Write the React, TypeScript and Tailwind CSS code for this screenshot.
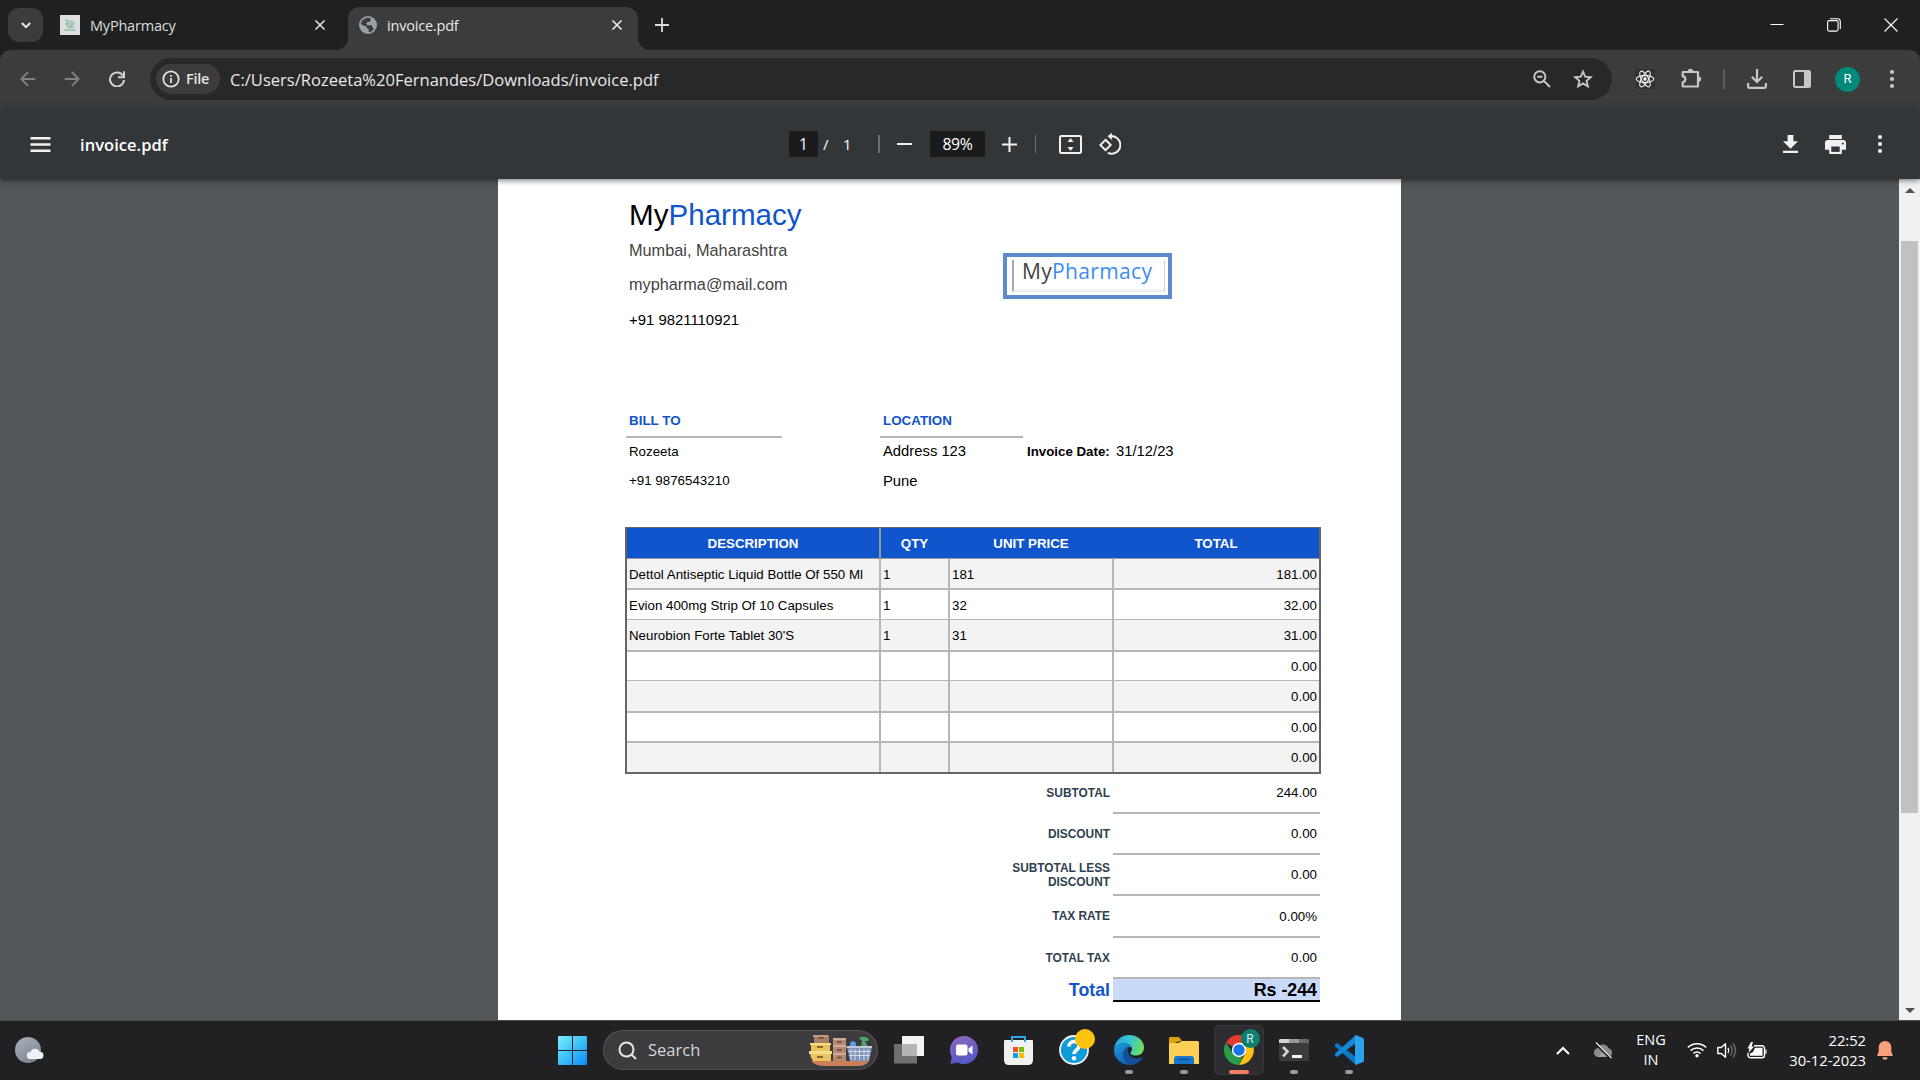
import React from "react";

type IconProps = { className?: string };

const ui = "font-['Open_Sans',sans-serif]";

/* ---------- Browser chrome ---------- */

function Cross({ className = "" }: IconProps) {
  return (
    <svg viewBox="0 0 12 12" className={className} fill="none" stroke="currentColor" strokeWidth="1.7">
      <path d="M1.5 1.5 10.5 10.5M10.5 1.5 1.5 10.5" />
    </svg>
  );
}

function Globe() {
  return (
    <svg viewBox="0 0 18 18" className="h-[18px] w-[18px]">
      <circle cx="9" cy="9" r="9" fill="#9aa0a6" />
      <path d="M8.2 1.8C5 2.2 2.4 4.600 1.800 8l3.400 2h2.300v1.800l2.200 1.500v2.900c1.800-.2 3.300-1 4.500-2.200l.4-1.800-1.300-1.200-.3-1.700H8.500L7.200 7.600l1-1.600h2.300l1.200-1.700V2.400c-1-.5-2.300-.8-3.500-.6z" fill="#3c3c3c" />
    </svg>
  );
}

function Dots({ className = "" }: IconProps) {
  return (
    <svg viewBox="0 0 6 20" className={className} fill="currentColor">
      <circle cx="3" cy="3" r="2.100" />
      <circle cx="3" cy="10" r="2.100" />
      <circle cx="3" cy="17" r="2.100" />
    </svg>
  );
}

function TabStrip() {
  return (
    <div className="flex h-[50px] items-center bg-[#1f2020] text-[#dcdcdc]">
      <div className="ml-2 flex h-[34px] w-[35px] items-center justify-center rounded-[11px] bg-[#3c3c3c]">
        <svg viewBox="0 0 10 7" className="h-[7px] w-[10px]" fill="none" stroke="#e8e8e8" strokeWidth="2">
          <path d="M.8 1 5 5.200 9.200 1" />
        </svg>
      </div>
      <div className="ml-[17px] flex h-5 w-5 items-center justify-center bg-[#dfdfdf]">
        <svg viewBox="0 0 14 14" className="h-[14px] w-[14px]" fill="none" stroke="#8fc4a9" strokeWidth="1.300">
          <path d="M2 2h2v4h3M5 3.500h4l2 2-1 4H5L3 6zM5.500 6h4M6 8h3M1 12h12" />
        </svg>
      </div>
      <span className={`${ui} ml-[10px] mt-[2px] w-[225px] text-[14.500px] leading-5 tracking-[-0.2px]`}>MyPharmacy</span>
      <Cross className="-ml-[1px] h-[12px] w-[12px]" />
      <div className="relative ml-[22px] mt-[7px] flex h-[43px] w-[290px] items-center rounded-t-[12px] bg-[#3c3c3c] pb-[7px] pl-[11px] text-[#e8e8e8]">
        <div className="absolute -left-3 bottom-0 h-3 w-3 overflow-hidden bg-[#3c3c3c]">
          <div className="h-3 w-3 rounded-br-[12px] bg-[#1f2020]" />
        </div>
        <div className="absolute -right-3 bottom-0 h-3 w-3 overflow-hidden bg-[#3c3c3c]">
          <div className="h-3 w-3 rounded-bl-[12px] bg-[#1f2020]" />
        </div>
        <Globe />
        <span className={`${ui} ml-[10px] mt-[2px] w-[224px] text-[14.500px] leading-5 tracking-[-0.2px]`}>invoice.pdf</span>
        <Cross className="h-[12px] w-[12px]" />
      </div>
      <svg viewBox="0 0 14 14" className="ml-[17px] h-[14px] w-[14px]" fill="none" stroke="#dcdcdc" strokeWidth="1.800">
        <path d="M7 0v14M0 7h14" />
      </svg>
      <div className="ml-auto mr-[22px] flex items-center gap-[43px]">
        <svg viewBox="0 0 14 14" className="h-[14px] w-[14px]" stroke="#fff" strokeWidth="1">
          <path d="M.5 6.500h13" />
        </svg>
        <svg viewBox="0 0 14 14" className="h-[14px] w-[14px]" fill="none" stroke="#fff" strokeWidth="1.100">
          <rect x=".6" y="2.600" width="10.500" height="10.500" rx="1.800" />
          <path d="M3 .7h7.500a2.800 2.800 0 0 1 2.800 2.800V11" />
        </svg>
        <svg viewBox="0 0 14 14" className="h-[14px] w-[14px]" stroke="#fff" strokeWidth="1.100">
          <path d="M.5.5l13 13M13.500.5l-13 13" />
        </svg>
      </div>
    </div>
  );
}

function ReactLogo() {
  return (
    <div className="flex h-5 w-5 items-center justify-center bg-[#323232]">
      <svg viewBox="-10 -10 20 20" className="h-5 w-5" fill="none" stroke="#f2f2f2" strokeWidth="1.100">
        <circle r="1.700" fill="#fff" stroke="none" />
        <ellipse rx="8.800" ry="3.400" />
        <ellipse rx="8.800" ry="3.400" transform="rotate(60)" />
        <ellipse rx="8.800" ry="3.400" transform="rotate(120)" />
      </svg>
    </div>
  );
}

function AddressBar() {
  return (
    <div className="bg-[#1f2020]">
      <div className="flex h-[59px] items-center rounded-t-[10px] border-b border-[#4a4a4a] bg-[#3c3c3c] text-[#c7c7c7]">
        <svg viewBox="0 0 16 16" className="ml-5 h-4 w-4" fill="none" stroke="#808080" strokeWidth="1.900">
          <path d="M15.200 8H1.500M8 1.200 1.300 8 8 14.800" />
        </svg>
        <svg viewBox="0 0 16 16" className="ml-[28px] h-4 w-4" fill="none" stroke="#808080" strokeWidth="1.900">
          <path d="M.8 8h13.700M8 1.200 14.700 8 8 14.800" />
        </svg>
        <svg viewBox="0 0 16 16" className="ml-[29px] h-4 w-4" fill="none" stroke="#d0d0d0" strokeWidth="2">
          <path d="M14 4.800A7 7 0 1 0 15 9" />
          <path d="M15 .3v5.900H9" />
        </svg>
        <div className="ml-[25px] flex h-[42px] w-[1462px] items-center rounded-full bg-[#282828] pl-[6px] pr-[19px]">
          <div className="flex h-[30px] w-[64px] items-center rounded-full bg-[#3c3c3c] pl-[6px] text-[#e3e3e3]">
            <svg viewBox="0 0 18 18" className="h-[18px] w-[18px]" fill="none" stroke="currentColor" strokeWidth="1.800">
              <circle cx="9" cy="9" r="7.700" />
              <path d="M9 8v5M9 5v1.800" />
            </svg>
            <span className={`${ui} ml-[6px] text-[14.500px] font-semibold leading-5 tracking-[-0.300px]`}>File</span>
          </div>
          <span className={`${ui} ml-[10px] mt-[2px] whitespace-nowrap text-[16.500px] leading-6 tracking-[0.020px] text-[#e8e8e8]`}>
            C:/Users/Rozeeta%20Fernandes/Downloads/invoice.pdf
          </span>
          <svg viewBox="0 0 18 18" className="ml-auto h-[18px] w-[18px]" fill="none" stroke="currentColor" strokeWidth="2">
            <circle cx="6.800" cy="6.800" r="5.600" />
            <path d="M10.900 10.900 17 17M4.200 6.800h5.200" />
          </svg>
          <svg viewBox="0 0 20 20" className="ml-[22px] h-5 w-5" fill="none" stroke="currentColor" strokeWidth="1.900">
            <path d="m10 2.600 2.200 5.100 5.600.5-4.200 3.700 1.200 5.400L10 14.400l-4.800 2.900 1.200-5.400-4.200-3.700 5.600-.5z" />
          </svg>
        </div>
        <div className="ml-[23px]">
          <ReactLogo />
        </div>
        <svg viewBox="0 0 22 22" className="ml-[25px] h-[22px] w-[22px]" fill="none" stroke="currentColor" strokeWidth="2.200">
          <path d="M4 4h14v14.500H2.700v-4.100c3.500-.6 3.500-5.600 0-6.200V4z" strokeLinejoin="round" />
          <path d="M7.800 3.500a2.700 2.700 0 0 1 5.400 0zM18.500 8.400a2.700 2.700 0 0 1 0 5.400z" fill="currentColor" stroke="none" />
        </svg>
        <div className="ml-[21px] h-5 w-[2px] bg-[#5c5c5c]" />
        <svg viewBox="0 0 20 20" className="ml-[22px] h-5 w-5" fill="none" stroke="currentColor" strokeWidth="2.200">
          <path d="M10 0v12.500M4.800 7.800 10 13l5.200-5.200M1.100 14v3.600q0 1.300 1.300 1.300h15.200q1.300 0 1.300-1.300V14" />
        </svg>
        <svg viewBox="0 0 18 18" className="ml-[26px] h-[18px] w-[18px]">
          <rect x="1" y="1" width="16" height="16" rx="1.500" fill="none" stroke="currentColor" strokeWidth="2" />
          <path d="M11 1h6v16h-6z" fill="currentColor" />
        </svg>
        <div className="ml-6 flex h-[25px] w-[25px] items-center justify-center rounded-full bg-[#00897b] font-[Roboto,sans-serif] text-[13px] text-white">
          R
        </div>
        <Dots className="ml-[29px] h-5 w-[6px]" />
      </div>
    </div>
  );
}

/* ---------- PDF viewer ---------- */

function PdfToolbar() {
  return (
    <div className="relative z-10 flex h-[70px] items-center bg-[#323639] text-[#f1f1f1] shadow-[0_1px_6px_rgba(0,0,0,0.600)]">
      <div className="flex w-[789px] items-center">
        <svg viewBox="0 0 20 15" className="ml-[30px] mt-px h-[15px] w-[21px]" fill="currentColor">
          <path d="M0 0h20v2.400H0zM0 6.300h20v2.400H0zM0 12.600h20V15H0z" />
        </svg>
        <span className={`${ui} ml-[29px] mt-[2px] text-[16.500px] font-semibold leading-6 tracking-[0.050px] text-white`}>invoice.pdf</span>
      </div>
      <span className={`${ui} h-[26px] w-[29px] bg-[#191b1c] text-center text-[15.500px] leading-[26px] text-white`}>1</span>
      <span className={`${ui} ml-[5px] w-[20px] text-[15px] leading-[26px] text-white`}>/</span>
      <span className={`${ui} w-[35px] text-[15px] leading-[26px] text-white`}>1</span>
      <div className="h-[18px] w-[2px] bg-[#6b6e70]" />
      <div className="ml-[17px] h-[2px] w-[15px] bg-[#f1f1f1]" />
      <span className={`${ui} ml-[18px] h-[26px] w-[55px] bg-[#191b1c] text-center text-[15.800px] leading-[26px] tracking-[-0.300px] text-white`}>89%</span>
      <svg viewBox="0 0 15 15" className="ml-[17px] h-[15px] w-[15px]" fill="none" stroke="currentColor" strokeWidth="2">
        <path d="M7.500 0v15M0 7.500h15" />
      </svg>
      <div className="ml-[18px] h-[18px] w-px bg-[#6b6e70]" />
      <svg viewBox="0 0 23 19" className="ml-[23px] h-[19px] w-[23px]">
        <rect x="1" y="1" width="21" height="17" rx="1.200" fill="none" stroke="currentColor" strokeWidth="2" />
        <path d="m11.500 3 3 4h-6zM11.500 16l-3-4h6z" fill="currentColor" />
      </svg>
      <svg viewBox="0 0 22 22" className="ml-[17px] h-[22px] w-[22px]" fill="none" stroke="currentColor" strokeWidth="2">
        <path d="m6.500 6.800 5.200 5.200-5.200 5.200L1.300 12z" />
        <path d="M11.500 3.200a8.800 8.800 0 1 1-2.700 16.700" />
        <path d="M12.800-.3v7.200L8.600 3.300z" fill="currentColor" stroke="none" />
      </svg>
      <div className="ml-auto mr-[37px] flex items-center">
        <svg viewBox="0 0 15 18" className="h-[18px] w-[15px]" fill="currentColor">
          <path d="M4.600 0h5.800v6.200H15l-7.500 7.500L0 6.200h4.600zM0 15.700h15V18H0z" />
        </svg>
        <svg viewBox="0 0 21 19" className="ml-[27px] h-[19px] w-[21px]">
          <path d="M4.200 0h12.600v4H4.200zM3 5h15a3 3 0 0 1 3 3v6.800h-4.200V19H4.200v-4.200H0V8a3 3 0 0 1 3-3z" fill="currentColor" />
          <path d="M6.300 11.500h8.400v5.400H6.300z" fill="#323639" />
          <circle cx="17.800" cy="8.600" r="1" fill="#323639" />
        </svg>
        <Dots className="ml-[31px] h-5 w-[6px]" />
      </div>
    </div>
  );
}

type Item = { name: string; qty: string; price: string; total: string; row: string };

const items: Item[] = [
  { name: "Dettol Antiseptic Liquid Bottle Of 550 Ml", qty: "1", price: "181", total: "181.00", row: "h-[31px] border-b-2 bg-[#f3f3f3] leading-[31px]" },
  { name: "Evion 400mg Strip Of 10 Capsules", qty: "1", price: "32", total: "32.00", row: "h-[30px] border-b bg-white leading-[31px]" },
  { name: "Neurobion Forte Tablet 30'S", qty: "1", price: "31", total: "31.00", row: "h-[32px] border-b-2 bg-[#f3f3f3] leading-[32px]" },
  { name: "", qty: "", price: "", total: "0.00", row: "h-[29px] border-b bg-white leading-[30px]" },
  { name: "", qty: "", price: "", total: "0.00", row: "h-[32px] border-b-2 bg-[#f3f3f3] leading-[32px]" },
  { name: "", qty: "", price: "", total: "0.00", row: "h-[30px] border-b-2 bg-white leading-[30px]" },
  { name: "", qty: "", price: "", total: "0.00", row: "h-[29px] border-b-0 bg-[#f3f3f3] leading-[29px]" },
];

function ItemsTable() {
  return (
    <div className="mt-[31px] w-[696px] border-x-2 border-b-2 border-t border-[#666666] text-[13.300px]">
      <div className="flex h-[31px] border-b border-[#999] bg-[#1155cc] text-center font-bold leading-[31px] text-white">
        <div className="w-[254px] border-r-2 border-[#999]">DESCRIPTION</div>
        <div className="w-[67px]">QTY</div>
        <div className="w-[166px]">UNIT PRICE</div>
        <div className="w-[204px]">TOTAL</div>
      </div>
      {items.map((item, i) => (
        <div key={i} className={`flex items-stretch border-[#b7b7b7] ${item.row}`}>
          <div className="w-[254px] whitespace-nowrap border-r-2 border-[#b7b7b7] pl-[2px] tracking-[0.010px]">{item.name}</div>
          <div className="w-[69px] border-r-2 border-[#b7b7b7] pl-[2px]">{item.qty}</div>
          <div className="w-[164px] border-r-2 border-[#b7b7b7] pl-[2px]">{item.price}</div>
          <div className="w-[205px] pr-[2px] text-right">{item.total}</div>
        </div>
      ))}
    </div>
  );
}

const totals = [
  { label: "SUBTOTAL", value: "244.00", row: "h-[40px]", labelPad: "pb-[2px]", valuePad: "" },
  { label: "DISCOUNT", value: "0.00", row: "h-[41px]", labelPad: "pb-[2px]", valuePad: "" },
  { label: "SUBTOTAL LESS DISCOUNT", value: "0.00", row: "h-[41px]", labelPad: "pb-[2px]", valuePad: "" },
  { label: "TAX RATE", value: "0.00%", row: "h-[42px]", labelPad: "pb-[2px]", valuePad: "pt-[1px]" },
  { label: "TOTAL TAX", value: "0.00", row: "h-[41px]", labelPad: "pb-[1px]", valuePad: "pt-[1px]" },
];

function Totals() {
  return (
    <div className="ml-[374px] w-[321px]">
      {totals.map((t) => (
        <div key={t.label} className={`flex ${t.row}`}>
          <div className={`flex w-[114px] items-center justify-end pr-[3px] text-right text-[11.900px] font-bold leading-[14px] text-[#2f3f4f] ${t.labelPad}`}>
            <span className="w-[104px]">{t.label}</span>
          </div>
          <div className={`flex w-[207px] items-center justify-end border-b-2 border-[#b7b7b7] pr-[3px] text-[13.300px] ${t.valuePad}`}>{t.value}</div>
        </div>
      ))}
      <div className="flex h-[23px] text-[17.800px] font-bold leading-[22px]">
        <div className="w-[114px] pr-[3px] text-right text-[#1155cc]">Total</div>
        <div className="w-[207px] border-b-2 border-black bg-[#c9daf8] pr-[3px] text-right">Rs -244</div>
      </div>
    </div>
  );
}

function InvoicePage() {
  return (
    <div className="ml-[498px] h-[841px] w-[903px] overflow-hidden bg-white pl-[127px] pt-[18px] font-['Liberation_Sans',Arial,sans-serif] text-black">
      <div className="flex">
        <div className="w-[378px] pl-[4px]">
          <div className="text-[29.600px] leading-[36px]">
            My<span className="text-[#1155cc]">Pharmacy</span>
          </div>
          <div className="text-[16.300px] leading-[34px] text-[#434343]">Mumbai, Maharashtra</div>
          <div className="text-[16.300px] leading-[35px] text-[#434343]">mypharma@mail.com</div>
          <div className="text-[14.900px] leading-[36px]">+91 9821110921</div>
        </div>
        <div className="mt-[56px] h-[46px] w-[169px] border-4 border-[#5b8bc9] py-[3px] pl-[5px] pr-[3px]">
          <div className="h-[32px] border-b-2 border-l-2 border-r border-b-[#ececec] border-l-[#a8a8a8] border-r-[#d0d0d0] pl-[8px] font-['Open_Sans',sans-serif] text-[21px] leading-[22px] tracking-[0.350px] text-[#444]">
            My<span className="text-[#3a8df5]">Pharmacy</span>
          </div>
        </div>
      </div>
      <div className="mt-[68px] flex">
        <div className="ml-px w-[156px]">
          <div className="border-b-2 border-[#b7b7b7] pl-[3px] text-[13.400px] font-bold leading-[30px] text-[#1155cc]">BILL TO</div>
          <div className="pl-[3px] text-[13.300px] leading-[28px]">Rozeeta</div>
          <div className="pl-[3px] text-[13.350px] leading-[30px]">+91 9876543210</div>
        </div>
        <div className="ml-[98px] w-[143px]">
          <div className="border-b-2 border-[#b7b7b7] pl-[3px] text-[13.400px] font-bold leading-[30px] text-[#1155cc]">LOCATION</div>
          <div className="pl-[3px] text-[14.800px] leading-[27px]">Address 123</div>
          <div className="pl-[3px] text-[14.800px] leading-[32px]">Pune</div>
        </div>
        <div className="ml-[4px] mt-[32px] flex">
          <span className="w-[89px] text-[13.300px] font-bold leading-[28px]">Invoice Date:</span>
          <span className="text-[14.800px] leading-[27px]">31/12/23</span>
        </div>
      </div>
      <div className="-mt-px">
        <ItemsTable />
      </div>
      <Totals />
    </div>
  );
}

function Scrollbar() {
  return (
    <div className="flex h-[841px] w-[21px] flex-col items-center bg-[#f1f1f1]">
      <svg viewBox="0 0 10 5" className="mt-[9px] h-[5px] w-[10px]" fill="#505050">
        <path d="M5 0l5 5H0z" />
      </svg>
      <div className="mt-[48px] h-[572px] w-[17px] bg-[#c1c1c1]" />
      <svg viewBox="0 0 10 5" className="mb-[7px] mt-auto h-[5px] w-[10px]" fill="#505050">
        <path d="M0 0h10L5 5z" />
      </svg>
    </div>
  );
}

/* ---------- Taskbar ---------- */

function WindowsLogo() {
  return (
    <svg viewBox="0 0 29 29" className="h-[29px] w-[29px]">
      <defs>
        <linearGradient id="win" x1="0" y1="0" x2="1" y2="1">
          <stop offset="0" stopColor="#7deeff" />
          <stop offset=".5" stopColor="#3cc0fb" />
          <stop offset="1" stopColor="#0a8dff" />
        </linearGradient>
      </defs>
      <path d="M1 0h13v14H0V1q0-1 1-1zM15 0h13q1 0 1 1v13H15zM0 15h14v14H1q-1 0-1-1zM15 15h14v13q0 1-1 1H15z" fill="url(#win)" />
    </svg>
  );
}

function SearchArt() {
  return (
    <svg viewBox="0 0 63 31" className="h-[31px] w-[63px]">
      <path d="M2 26h58q-3 5-11 5H17Q6 31 2 26z" fill="#c98058" />
      <path d="M5 1h15v7H5z" fill="#a77e68" />
      <path d="M4 0h15l1 2H4z" fill="#c19a84" />
      <path d="M2 8h19v8H2zM1 18h21v8H4Q1 22 1 18z" fill="#e9c45e" />
      <path d="M1 8h21v2H1zM0 16h23v3H0z" fill="#f7dc86" />
      <path d="M9 3h6M8 12h6M8 22h6" stroke="#6e4a25" strokeWidth="1.400" />
      <path d="M24 4h13v22H24z" fill="#b58a74" />
      <path d="M24 3h13v2H24zM24 10h13v2H24zM24 18h13v2H24z" fill="#d2ab96" />
      <path d="M28 7h5M28 15h5M28 22.500h5" stroke="#6f4a3b" strokeWidth="1.300" />
      <path d="M41 8q3-4 6 0v4h-6z" fill="#5b9bdc" />
      <path d="M50 3q5-3 10 1l-1 2h-3l3 6h-7l1-6z" fill="#4fa66b" />
      <path d="M38 12h25l-3 14H41z" fill="#7f93b8" />
      <path d="M42 14v11M46 14v11M50.500 14v11M55 14v11M59 14v11M39 16.500h23M40 20.500h21" stroke="#d5dcec" strokeWidth="1" />
      <path d="M37.500 11h25.500v2H37.500z" fill="#c3cade" />
    </svg>
  );
}

function TaskCell({ children, mark = "" }: { children: React.ReactNode; mark?: string }) {
  return (
    <div className="relative flex h-[50px] w-[55px] items-center justify-center">
      {children}
      {mark && <div className={`absolute bottom-[1px] h-1 rounded-full ${mark}`} />}
    </div>
  );
}

function Chat() {
  return (
    <svg viewBox="0 0 28 28" className="h-7 w-7">
      <defs>
        <linearGradient id="chat" x1=".2" y1="0" x2=".6" y2="1">
          <stop offset="0" stopColor="#8a68b8" />
          <stop offset="1" stopColor="#5059c9" />
        </linearGradient>
      </defs>
      <path d="M14 0a14 14 0 1 1-6.500 26.400L.5 28l1.300-7A14 14 0 0 1 14 0z" fill="url(#chat)" />
      <rect x="6" y="8.500" width="11.500" height="11" rx="2" fill="#fff" />
      <path d="m18.500 12.500 4-3v9l-4-3z" fill="#fff" />
    </svg>
  );
}

function Store() {
  return (
    <svg viewBox="0 0 29 29" className="h-[29px] w-[29px]">
      <path d="M8 6V1h13v5" fill="none" stroke="#29a8e8" strokeWidth="2" />
      <path d="M1 4h27q1 0 1 1v19q0 5-5 5H5q-5 0-5-5V5q0-1 1-1z" fill="#f1f1f1" />
      <path d="M8 6V1M21 6V1" stroke="#29a8e8" strokeWidth="2" />
      <path d="M9 11h5v5H9z" fill="#f25022" />
      <path d="M15 11h5v5h-5z" fill="#7fba00" />
      <path d="M9 17h5v5H9z" fill="#00a4ef" />
      <path d="M15 17h5v5h-5z" fill="#ffb900" />
    </svg>
  );
}

function Help() {
  return (
    <div className="relative">
      <svg viewBox="0 0 30 30" className="h-[30px] w-[30px]">
        <circle cx="15" cy="15" r="14" fill="#0f9ad8" stroke="#f3f3f3" strokeWidth="1.800" />
        <path d="M10 11.500c0-6.500 10-6.500 10-.5 0 4-5 4-5 8" fill="none" stroke="#fff" strokeWidth="3.600" />
        <circle cx="15" cy="23.300" r="2.300" fill="#fff" />
      </svg>
      <div className="absolute -right-[6px] -top-[6px] h-5 w-5 rounded-full bg-[#ffc20e]" />
    </div>
  );
}

function Edge() {
  return (
    <svg viewBox="0 0 30 30" className="h-[30px] w-[30px]">
      <defs>
        <linearGradient id="edgeTop" x1="0" y1=".3" x2="1" y2=".5">
          <stop offset="0" stopColor="#2aa5e0" />
          <stop offset=".5" stopColor="#35c4d4" />
          <stop offset="1" stopColor="#6fe05a" />
        </linearGradient>
        <linearGradient id="edgeSide" x1="0" y1="0" x2=".6" y2="1">
          <stop offset="0" stopColor="#1b9de2" />
          <stop offset="1" stopColor="#0f5fb8" />
        </linearGradient>
      </defs>
      <path d="M0 14C1 6 7 0 15 0c9 0 15 6 15 12.500 0 5-3.500 8-8 8-4 0-5.500-1.500-5.500-2.500s1.500-1.500 1.500-4c0-3-3-5.500-7.500-5.500C5.500 8.500 1 10.500 0 14z" fill="url(#edgeTop)" />
      <path d="M0 15C0 10.500 5 8.500 10.500 8.500c4 0 6.500 2 7.300 4-4-1.500-8.300 1.500-8.300 7 0 5 3.500 9 8 10.200C8 31 0 24 0 15z" fill="url(#edgeSide)" />
      <path d="M9.500 18.500c0-3 1.500-5.500 4.500-6.300-1.500 6 2.500 11.300 8.500 11.300 2.500 0 4.300-.8 5.300-1.300.6-.2.900.3.600.8-2.400 4.300-7 6.800-10.900 6.800-4.500-1-8-5.500-8-11.300z" fill="#12509b" />
    </svg>
  );
}

function Folder() {
  return (
    <svg viewBox="0 0 30 27" className="h-[27px] w-[30px]">
      <path d="M0 1.500Q0 0 1.500 0H10l3 4h-2L0 8z" fill="#dea20c" />
      <path d="M0 6h9l4-2h15.500Q30 4 30 5.500V27H0z" fill="#fdd055" />
      <path d="M5 27v-5q0-3 3-3h14q3 0 3 3v5z" fill="#1878cf" />
      <path d="M9 22.500h12" stroke="#0e4c8c" strokeWidth="1.300" />
    </svg>
  );
}

function Chrome() {
  return (
    <div className="relative">
      <svg viewBox="-15 -15 30 30" className="h-[30px] w-[30px]">
        <path d="M0 0 -13 -7.500A15 15 0 0 1 13 -7.500z" fill="#e33b2e" />
        <path d="M0-7.300H13A15 15 0 0 1 0 15L6.300 3.600z" fill="#fbc116" />
        <path d="M-13-7.500-6.300 3.600 0 7.300 3.400 7 0 15A15 15 0 0 1-13-7.500z" fill="#2a9d49" />
        <circle r="7.200" fill="#fff" />
        <circle r="5.700" fill="#1a73e8" />
      </svg>
      <div className="absolute -right-[6px] -top-[6px] flex h-[19px] w-[19px] items-center justify-center rounded-full bg-[#0b8073] font-[Roboto,sans-serif] text-[12px] text-[#d6efeb]">
        R
      </div>
    </div>
  );
}

function Terminal() {
  return (
    <svg viewBox="0 0 30 22" className="h-[22px] w-[30px]">
      <rect width="30" height="22" rx="1.500" fill="#3b3b3b" />
      <path d="M1 0h9v4H0V1z" fill="#d4d4d4" />
      <path d="M10 0h10v4H10z" fill="#9a9a9a" />
      <path d="M20 0h9l1 1v3H20z" fill="#6a6a6a" />
      <path d="m4 8 4.500 4.500L4 17.500" fill="none" stroke="#d8d8d8" strokeWidth="2.600" />
      <path d="M13 16h10v3H13z" fill="#f2f2f2" />
    </svg>
  );
}

function Code() {
  return (
    <svg viewBox="0 0 30 30" className="h-[30px] w-[30px]">
      <path d="M1 9.500 3 8 22 22v8L1 11.500z" fill="#0b78c6" />
      <path d="M1 20.500 3 22 22 8V0L1 18.500z" fill="#1587d6" />
      <path d="m22 0 7 3q1 .5 1 1.500v21q0 1-1 1.500l-7 3-1-1V1z" fill="#29a3ee" />
    </svg>
  );
}

function Taskbar() {
  return (
    <div className="flex h-[60px] items-center border-t border-[#4a4a4b] bg-[#212123] pb-px text-white">
      <svg viewBox="0 0 30 27" className="ml-[15px] h-[27px] w-[30px]">
        <defs>
          <linearGradient id="moon" x1="0" y1="0" x2=".7" y2="1">
            <stop offset="0" stopColor="#aab2bd" />
            <stop offset="1" stopColor="#7c8591" />
          </linearGradient>
        </defs>
        <circle cx="13" cy="13" r="13" fill="url(#moon)" />
        <path d="M15.500 22a3.600 3.600 0 0 1 0-7.200 5 5 0 0 1 9.300 0 3.600 3.600 0 0 1 .2 7.200z" fill="#eef2f6" />
      </svg>
      <div className="ml-[513px]">
        <WindowsLogo />
      </div>
      <div className="ml-4 flex h-10 w-[275px] items-center rounded-full border border-[#59595c] border-b-[#4a4a4d] bg-[#3c3c3f] pl-[14px] pr-[5px]">
        <svg viewBox="0 0 19 19" className="h-[19px] w-[19px]" fill="none" stroke="#e6e6e6" strokeWidth="2">
          <circle cx="8.500" cy="8.500" r="7" />
          <path d="m13.500 13.500 4.500 4.500" />
        </svg>
        <span className={`${ui} ml-[11px] text-[16.500px] leading-6 text-[#d6d6d6]`}>Search</span>
        <div className="ml-auto">
          <SearchArt />
        </div>
      </div>
      <div className="ml-[3px] flex items-center">
        <TaskCell>
          <svg viewBox="0 0 30 28" className="h-7 w-[30px]">
            <path d="M0 8h23v19.500H0z" fill="#6f6f70" />
            <path d="M8 0h22v20H8z" fill="#f3f3f3" />
            <path d="M8 8h15v12H8z" fill="#b4b4b4" />
          </svg>
        </TaskCell>
        <TaskCell><Chat /></TaskCell>
        <TaskCell><Store /></TaskCell>
        <TaskCell><Help /></TaskCell>
        <TaskCell mark="w-2 bg-[#9a9a9a]"><Edge /></TaskCell>
        <TaskCell mark="w-2 bg-[#9a9a9a]"><Folder /></TaskCell>
        <TaskCell mark="w-5 bg-[#f47d62]">
          <div className="flex h-[50px] w-[50px] items-center justify-center rounded-[5px] border border-[#38383c] bg-[#2d2d31]">
            <Chrome />
          </div>
        </TaskCell>
        <TaskCell mark="w-2 bg-[#9a9a9a]"><Terminal /></TaskCell>
        <TaskCell mark="w-2 bg-[#9a9a9a]"><Code /></TaskCell>
      </div>
      <div className="ml-auto mr-[27px] flex items-center">
        <svg viewBox="0 0 14 9" className="h-[9px] w-[14px]" fill="none" stroke="#fff" strokeWidth="2">
          <path d="m1 8 6-6 6 6" />
        </svg>
        <svg viewBox="0 0 20 17" className="ml-[23px] h-[17px] w-5">
          <path d="M4.500 15a4.500 4.500 0 0 1 0-8.800 6 6 0 0 1 11 0A4.500 4.500 0 0 1 15.500 15z" fill="#8b8b8b" />
          <path d="M4.500 15 12 8l5 6.500z" fill="#a8a8a8" />
          <path d="M3 1.500 18 16.500" stroke="#212123" strokeWidth="3" />
          <path d="M3 .5 18.500 16" stroke="#e8e8e8" strokeWidth="1.300" />
        </svg>
        <div className={`${ui} ml-[20px] w-[36px] text-center text-[14.500px] leading-[20px]`}>
          <div>ENG</div>
          <div>IN</div>
        </div>
        <svg viewBox="0 0 20 16" className="ml-[18px] h-4 w-5" fill="none" stroke="#fff" strokeWidth="1.500">
          <path d="M.8 5.500a13 13 0 0 1 18.400 0M3.600 8.600a9 9 0 0 1 12.800 0M6.400 11.500a5 5 0 0 1 7.200 0" />
          <circle cx="10" cy="13.700" r="1.700" fill="#fff" stroke="none" />
        </svg>
        <svg viewBox="0 0 20 17" className="ml-[10px] h-[17px] w-5" fill="none" stroke="#fff" strokeWidth="1.400">
          <path d="M.8 5.500h3.400L8.500 1.700v13.600l-4.300-3.800H.8z" strokeLinejoin="round" />
          <path d="M11 6q1.600 2.500 0 5" />
          <path d="M13.500 3.500q3.500 5 0 10M16 1.500q5 7 0 14" stroke="#6a6a6a" />
        </svg>
        <svg viewBox="0 0 20 17" className="ml-[10px] h-[17px] w-5">
          <path d="M7 3.800h8a2.500 2.500 0 0 1 2.500 2.500v6.900a2.500 2.500 0 0 1-2.500 2.500H3.500A2.500 2.500 0 0 1 1 13.200V11" fill="none" stroke="#fff" strokeWidth="1.400" />
          <path d="M8 5.700h7.500v8H3V11.500l3-1.500z" fill="#fff" />
          <path d="M18.300 7.500h1.200v4.200h-1.200zM4 0 .5 6.500h2L1.500 11 7 4.500H4.500L6 0z" fill="#fff" />
        </svg>
        <div className={`${ui} ml-[19px] w-[80px] whitespace-nowrap text-right text-[14.800px] leading-[20px] tracking-[-0.050px]`}>
          <div>22:52</div>
          <div>30-12-2023</div>
        </div>
        <svg viewBox="0 0 16 19" className="ml-[11px] h-[19px] w-4" fill="#f9a07c">
          <path d="M8 0a6.300 6.300 0 0 1 6.300 6.300v4.500L16 15H0l1.700-4.200V6.300A6.300 6.300 0 0 1 8 0zM5.500 16.200h5a2.500 2.500 0 0 1-5 0z" />
        </svg>
      </div>
    </div>
  );
}

export default function App() {
  return (
    <div className="flex h-[1080px] w-[1920px] flex-col overflow-hidden bg-[#525659]">
      <TabStrip />
      <AddressBar />
      <PdfToolbar />
      <div className="flex h-[841px] justify-between">
        <InvoicePage />
        <Scrollbar />
      </div>
      <Taskbar />
    </div>
  );
}
